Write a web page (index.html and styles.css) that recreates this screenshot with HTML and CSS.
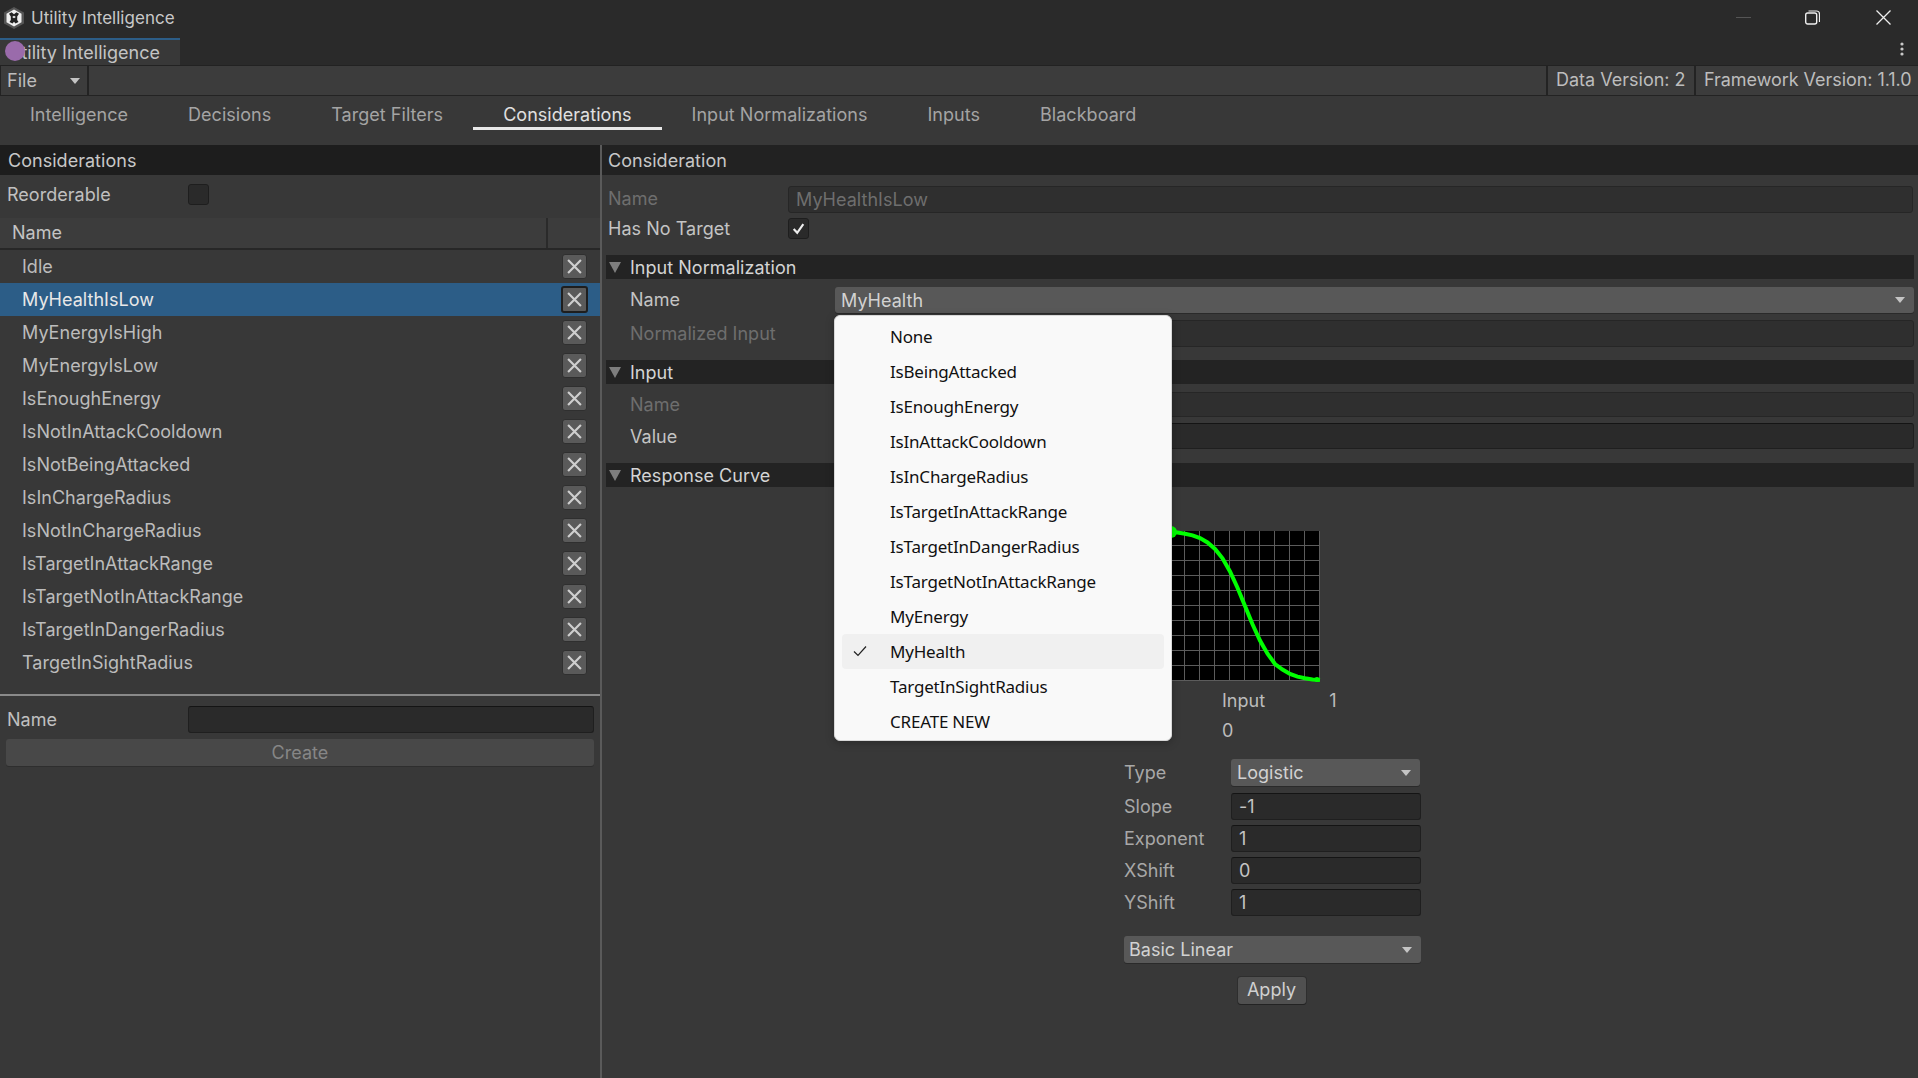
FILE: index.html
```html
<!DOCTYPE html>
<html lang="en">
<head>
<meta charset="utf-8">
<title>Utility Intelligence</title>
<link rel="stylesheet" href="styles.css">
</head>
<body>
<div class="app">
  <header class="titlebar">
    <svg class="logo" viewBox="0 0 20 22" aria-hidden="true">
      <path d="M10 0 20 5.500v11L10 22 0 16.500v-11z" fill="#555"/>
      <path d="M10 2.500 17.500 6.800v8.400L10 19.500 2.500 15.200V6.800z" fill="#f0f0f0"/>
      <path d="M10 7.200 7.600 5.200 5 6.700l1.800 2.800v3.400L5.500 15l3 1.500L10 14.800l1.500 1.700 3-1.500-1.300-2.100V9.500L15 6.700l-2.600-1.500z" fill="#222"/>
      <path d="M10 8.800 11.800 10 10 11.200 8.200 10z" fill="#f0f0f0"/>
    </svg>
    <span class="title-text">Utility Intelligence</span>
    <div class="win-controls">
      <svg class="win-min" viewBox="0 0 15 15" aria-hidden="true"><path d="M0 7.500h15" stroke="#555" fill="none"/></svg>
      <svg class="win-restore" viewBox="0 0 15 15" aria-hidden="true"><rect x=".7" y="3" width="11" height="11" rx="2" fill="none" stroke="#eee" stroke-width="1.400"/><path d="M3.500 1h8a3 3 0 0 1 3 3v8" fill="none" stroke="#eee" stroke-width="1.200"/></svg>
      <svg class="win-close" viewBox="0 0 15 15" aria-hidden="true"><path d="M.5.500l14 14M14.500.500l-14 14" stroke="#eee" stroke-width="1.300" fill="none"/></svg>
    </div>
  </header>

  <div class="tabstrip">
    <div class="doc-tab"><span class="doc-tab-text">Utility Intelligence</span><span class="cursor-dot"></span></div>
    <svg class="kebab" viewBox="0 0 4 14" aria-hidden="true"><circle cx="2" cy="2" r="1.600"/><circle cx="2" cy="7" r="1.600"/><circle cx="2" cy="12" r="1.600"/></svg>
  </div>

  <div class="menubar">
    <div class="menu-cell file-cell"><span>File</span><span class="arrow arrow-sm"></span></div>
    <div class="menu-cell menu-fill"></div>
    <div class="menu-cell data-cell">Data Version: 2</div>
    <div class="menu-cell fw-cell">Framework Version: 1.1.0</div>
  </div>

  <nav class="tabs">
    <span class="tab">Intelligence</span>
    <span class="tab">Decisions</span>
    <span class="tab">Target Filters</span>
    <span class="tab tab-active">Considerations</span>
    <span class="tab">Input Normalizations</span>
    <span class="tab">Inputs</span>
    <span class="tab">Blackboard</span>
  </nav>

  <main class="panes">
    <section class="left">
      <div class="head head-left">Considerations</div>
      <div class="reorder-row">
        <span class="field-label">Reorderable</span>
        <span class="check"></span>
      </div>
      <div class="table-head"><span class="col-name">Name</span><span class="col-action"></span></div>
      <ul class="rows">
        <li class="row"><span>Idle</span><button class="x-btn"><svg viewBox="0 0 14 14"><path d="M1 1l12 12M13 1 1 13"/></svg></button></li>
        <li class="row row-sel"><span>MyHealthIsLow</span><button class="x-btn"><svg viewBox="0 0 14 14"><path d="M1 1l12 12M13 1 1 13"/></svg></button></li>
        <li class="row"><span>MyEnergyIsHigh</span><button class="x-btn"><svg viewBox="0 0 14 14"><path d="M1 1l12 12M13 1 1 13"/></svg></button></li>
        <li class="row"><span>MyEnergyIsLow</span><button class="x-btn"><svg viewBox="0 0 14 14"><path d="M1 1l12 12M13 1 1 13"/></svg></button></li>
        <li class="row"><span>IsEnoughEnergy</span><button class="x-btn"><svg viewBox="0 0 14 14"><path d="M1 1l12 12M13 1 1 13"/></svg></button></li>
        <li class="row"><span>IsNotInAttackCooldown</span><button class="x-btn"><svg viewBox="0 0 14 14"><path d="M1 1l12 12M13 1 1 13"/></svg></button></li>
        <li class="row"><span>IsNotBeingAttacked</span><button class="x-btn"><svg viewBox="0 0 14 14"><path d="M1 1l12 12M13 1 1 13"/></svg></button></li>
        <li class="row"><span>IsInChargeRadius</span><button class="x-btn"><svg viewBox="0 0 14 14"><path d="M1 1l12 12M13 1 1 13"/></svg></button></li>
        <li class="row"><span>IsNotInChargeRadius</span><button class="x-btn"><svg viewBox="0 0 14 14"><path d="M1 1l12 12M13 1 1 13"/></svg></button></li>
        <li class="row"><span>IsTargetInAttackRange</span><button class="x-btn"><svg viewBox="0 0 14 14"><path d="M1 1l12 12M13 1 1 13"/></svg></button></li>
        <li class="row"><span>IsTargetNotInAttackRange</span><button class="x-btn"><svg viewBox="0 0 14 14"><path d="M1 1l12 12M13 1 1 13"/></svg></button></li>
        <li class="row"><span>IsTargetInDangerRadius</span><button class="x-btn"><svg viewBox="0 0 14 14"><path d="M1 1l12 12M13 1 1 13"/></svg></button></li>
        <li class="row"><span>TargetInSightRadius</span><button class="x-btn"><svg viewBox="0 0 14 14"><path d="M1 1l12 12M13 1 1 13"/></svg></button></li>
      </ul>
      <div class="create-box">
        <div class="create-row"><span class="field-label">Name</span><div class="input create-input"></div></div>
        <div class="create-btn">Create</div>
      </div>
    </section>

    <section class="right">
      <div class="head head-right">Consideration</div>
      <div class="top-fields">
        <div class="f-row f-name"><span class="lab dim">Name</span><div class="input input-dim">MyHealthIsLow</div></div>
        <div class="f-row f-target"><span class="lab">Has No Target</span><span class="check"><svg viewBox="0 0 14 14"><path d="M2.500 7.500 5.800 11 11.500 3"/></svg></span></div>
      </div>

      <div class="fold"><span class="tri"></span>Input Normalization</div>
      <div class="group">
        <div class="g-row g-first"><span class="lab2 lab-up">Name</span><div class="dropdown dd-full"><span>MyHealth</span><span class="arrow"></span></div></div>
        <div class="g-row g-norm"><span class="lab2 dim">Normalized Input</span><div class="input input-dim"></div></div>
      </div>

      <div class="fold fold-input"><span class="tri"></span>Input</div>
      <div class="group">
        <div class="g-row g-inname"><span class="lab2 dim">Name</span><div class="input input-dim"></div></div>
        <div class="g-row g-value"><span class="lab2">Value</span><div class="input"></div></div>
      </div>

      <div class="fold fold-curve"><span class="tri"></span>Response Curve</div>

      <div class="curve">
        <div class="graph-block">
          <svg class="graph" viewBox="0 0 150 150" aria-hidden="true">
            <defs>
              <pattern id="grid" width="15" height="15" patternUnits="userSpaceOnUse"><path d="M15 0V15M0 15H15" stroke="#5c5c5c" stroke-width="2" fill="none"/></pattern>
            </defs>
            <rect width="150" height="150" fill="#000"/>
            <rect width="150" height="150" fill="url(#grid)"/>
            <polyline class="curve-line" points="0,1 7.500,1.600 15,2.700 22.500,4.400 30,7 37.500,11.400 45,17.900 52.500,27.300 60,40.400 67.500,56.700 75,75 82.500,93.300 90,109.600 97.500,122.700 105,133 112.500,138.600 120,143 127.500,145.600 135,147.300 142.500,148.400 150,149"/>
            <circle cx="1" cy="1" r="6" fill="#0f0"/>
            <circle cx="147" cy="148.500" r="2.500" fill="#0f0"/>
          </svg>
          <div class="axis-row"><span class="axis-input">Input</span><span class="axis-one">1</span></div>
          <div class="axis-zero">0</div>
        </div>

        <div class="params">
          <div class="p-row p-type"><span class="p-lab">Type</span><div class="dropdown dd-type"><span>Logistic</span><span class="arrow"></span></div></div>
          <div class="p-row"><span class="p-lab">Slope</span><div class="input">-1</div></div>
          <div class="p-row"><span class="p-lab">Exponent</span><div class="input">1</div></div>
          <div class="p-row"><span class="p-lab">XShift</span><div class="input">0</div></div>
          <div class="p-row"><span class="p-lab">YShift</span><div class="input">1</div></div>
          <div class="dropdown dd-preset"><span>Basic Linear</span><span class="arrow"></span></div>
          <div class="apply-wrap"><div class="apply">Apply</div></div>
        </div>
      </div>
    </section>
  </main>

  <div class="popup">
    <div class="pop-item">None</div>
    <div class="pop-item">IsBeingAttacked</div>
    <div class="pop-item">IsEnoughEnergy</div>
    <div class="pop-item">IsInAttackCooldown</div>
    <div class="pop-item">IsInChargeRadius</div>
    <div class="pop-item">IsTargetInAttackRange</div>
    <div class="pop-item">IsTargetInDangerRadius</div>
    <div class="pop-item">IsTargetNotInAttackRange</div>
    <div class="pop-item">MyEnergy</div>
    <div class="pop-item pop-sel"><svg class="pop-check" viewBox="0 0 14 12" aria-hidden="true"><path d="M1 6.500 5 10.500 13 1.500"/></svg>MyHealth</div>
    <div class="pop-item">TargetInSightRadius</div>
    <div class="pop-item">CREATE NEW</div>
  </div>
</div>
</body>
</html>
```
FILE: styles.css
```css
* { box-sizing: border-box; }
html, body { margin: 0; padding: 0; height: 100%; }
body { background: #383838; font-family: Inter, "Liberation Sans", sans-serif; font-size: 18px; letter-spacing: .03px; color: #c4c4c4; overflow: hidden; }
ul { list-style: none; margin: 0; padding: 0; }
button { padding: 0; font: inherit; }

.app { position: relative; width: 1918px; height: 1078px; display: flex; flex-direction: column; }

.titlebar { height: 38px; background: #2a2a2a; display: flex; align-items: center; padding-left: 4px; }
.logo { width: 20px; height: 22px; margin-right: 7px; margin-top: -3px; }
.title-text { font-size: 17px; color: #c8c8c8; margin-top: -2px; }
.win-controls { margin-left: auto; display: flex; align-items: center; padding-right: 27px; margin-top: -4px; }
.win-controls svg { width: 15px; height: 15px; display: block; }
.win-min { margin-right: 54px; }
.win-restore { margin-right: 56px; }

.tabstrip { height: 28px; background: #2a2a2a; position: relative; border-bottom: 1px solid #222; }
.doc-tab { position: absolute; left: 0; top: 0; width: 180px; height: 27px; background: #383838; border-top: 2px solid #2c5d87; color: #c4c4c4; font-size: 18px; line-height: 25px; padding-left: 8px; overflow: hidden; }
.cursor-dot { position: absolute; left: 5px; top: 1px; width: 20px; height: 20px; border-radius: 50%; background: #9a6bab; }
.kebab { position: absolute; right: 14px; top: 4px; width: 4px; height: 14px; fill: #c8c8c8; }

.menubar { height: 30px; display: flex; background: #232323; gap: 2px; padding: 0 0 1px 1px; }
.menu-cell { background: #3c3c3c; display: flex; align-items: center; color: #bdbdbd; font-size: 18px; white-space: nowrap; }
.file-cell { width: 86px; padding-left: 6px; justify-content: space-between; padding-right: 7px; }
.menu-fill { flex: 1; }
.data-cell { width: 146px; padding: 0 0 2px 8px; letter-spacing: 0; }
.fw-cell { width: 222px; padding: 0 0 2px 8px; letter-spacing: -.05px; }

.arrow { width: 0; height: 0; border-left: 5.500px solid transparent; border-right: 5.500px solid transparent; border-top: 6px solid #c4c4c4; flex: none; }

.tabs { height: 49px; display: flex; align-items: flex-start; padding-top: 6px; }
.tab { padding: 0 30px; height: 28px; line-height: 26px; color: #a4a4a4; border-bottom: 3px solid transparent; white-space: nowrap; font-size: 18px; letter-spacing: .03px; }
.tab-active { color: #e0e0e0; border-bottom-color: #e8e8e8; }

.panes { flex: 1; display: flex; min-height: 0; }
.left { width: 600px; flex: none; }
.right { flex: 1; border-left: 2px solid #5a5a5a; padding-right: 2px; min-width: 0; }

.head { height: 30px; display: flex; align-items: center; color: #c8c8c8; font-size: 18px; }
.head-left { background: #1d1d1d; padding-left: 8px; }
.head-right { background: #222; padding-left: 6px; margin-right: -2px; }

.field-label { color: #c0c0c0; }
.reorder-row { height: 43px; padding: 0 0 4px 7px; display: flex; align-items: center; }
.reorder-row .check { margin-left: auto; margin-right: 391px; }

.check { width: 21px; height: 21px; border-radius: 3px; background: #2a2a2a; border: 1px solid #1e1e1e; display: flex; align-items: center; justify-content: center; }
.check svg { width: 15px; height: 15px; fill: none; stroke: #eee; stroke-width: 2; }

.table-head { height: 32px; background: #3c3c3c; border-bottom: 2px solid #272727; display: flex; }
.col-name { flex: 1; padding-left: 12px; line-height: 30px; border-right: 2px solid #2a2a2a; color: #c4c4c4; }
.col-action { width: 52px; }

.row { height: 33px; display: flex; align-items: center; justify-content: space-between; padding: 0 13px 0 22px; color: #bcbcbc; }
.row-sel { background: #2c5d87; color: #e8e8e8; }
.x-btn { width: 25px; height: 25px; background: #5a5a5a; border: 1px solid #2f2f2f; border-radius: 3px; display: flex; align-items: center; justify-content: center; }
.row-sel .x-btn { border: 2px solid #1e1e1e; width: 27px; height: 27px; margin-right: -1px; }
.x-btn svg { width: 15px; height: 15px; fill: none; stroke: #cfcfcf; stroke-width: 2; }

.create-box { margin-top: 15px; border-top: 2px solid #8a8a8a; padding: 9px 6px 0 7px; }
.create-row { display: flex; align-items: center; justify-content: space-between; height: 28px; }
.create-input { width: 406px; }
.create-btn { margin: 6px 0 0 -1px; height: 27px; background: #484848; border-radius: 3px; color: #868686; text-align: center; line-height: 27px; box-shadow: 0 1px 0 #2e2e2e; }

.input { height: 27px; background: #2a2a2a; border: 1px solid #1f1f1f; border-top-color: #141414; border-radius: 3px; color: #c4c4c4; padding-left: 7px; line-height: 26px; font-size: 18px; }
.input-dim { background: #2f2f2f; border-color: #262626; color: #6e6e6e; }

.top-fields { padding-left: 6px; }
.lab { width: 180px; flex: none; color: #c4c4c4; }
.lab2 { width: 205px; flex: none; color: #c4c4c4; }
.lab-up { margin-top: -2px; }
.dim { color: #6e6e6e; }
.f-row { display: flex; align-items: center; }
.f-row .input { flex: 1; margin-right: 3px; }
.f-name { margin-top: 11px; height: 27px; }
.f-name .lab { margin-top: -2px; }
.f-target { margin-top: 5px; height: 21px; }

.fold { background: #232323; height: 24px; margin: 16px 2px 0 4px; display: flex; align-items: center; color: #d4d4d4; padding-left: 3px; }
.tri { width: 0; height: 0; border-left: 6.500px solid transparent; border-right: 6.500px solid transparent; border-top: 11px solid #7e7e7e; margin-right: 9px; }
.fold-input { margin-top: 13px; }
.fold-curve { margin-top: 14px; }

.group { padding-left: 28px; }
.g-row { display: flex; align-items: center; }
.g-row .input, .g-row .dropdown { flex: 1; margin-right: 2px; }
.g-first { margin-top: 8px; height: 26px; }
.g-norm { margin-top: 7px; height: 27px; }
.g-inname { margin-top: 8px; height: 25px; }
.g-inname .input { height: 25px; }
.g-value { margin-top: 6px; height: 26px; }
.g-value .input { height: 26px; }

.dropdown { height: 26px; background: #585858; border-radius: 3px; display: flex; align-items: center; justify-content: space-between; padding: 0 9px 0 6px; color: #d2d2d2; box-shadow: 0 1px 0 #2a2a2a; }

.curve { margin-left: 522px; width: 297px; padding-top: 44px; }
.graph-block { margin-left: 46px; }
.graph { width: 150px; height: 150px; display: block; overflow: visible; }
.curve-line { fill: none; stroke: #0f0; stroke-width: 4; }
.axis-row { height: 36px; padding: 7px 0 0 52px; color: #bcbcbc; line-height: 26px; display: flex; }
.axis-one { margin-left: 64px; }
.axis-zero { padding-left: 52px; color: #bcbcbc; line-height: 26px; height: 26px; padding-top: 1px; }

.params { margin-top: 16px; }
.p-row { display: flex; align-items: center; height: 27px; margin-bottom: 5px; }
.p-type { margin-bottom: 7px; }
.p-lab { width: 107px; flex: none; color: #a8a8a8; }
.p-row .input, .p-row .dropdown { flex: 1; }
.p-row .dropdown { margin: 0 1px 0 0; height: 27px; }
.dd-preset { margin-top: 20px; height: 27px; padding-left: 5px; }
.apply-wrap { display: flex; justify-content: center; margin-top: 14px; margin-left: -2px; }
.apply { width: 68px; height: 27px; background: #505050; border-radius: 3px; color: #d0d0d0; text-align: center; line-height: 26px; box-shadow: 0 1px 0 #232323, 0 0 0 1px #2e2e2e; }

.popup { position: absolute; left: 834px; top: 315px; width: 338px; height: 426px; background: #f9f9f9; border: 1px solid #d8d8d8; border-radius: 6px; padding: 3px 7px; font-family: "Noto Sans", "Open Sans", sans-serif; font-size: 17px; color: #111; box-shadow: 0 2px 8px rgba(0,0,0,.25); }
.pop-item { position: relative; height: 35px; line-height: 35px; padding-left: 48px; letter-spacing: -.2px; white-space: nowrap; }
.pop-sel { background: #f0f0f0; border-radius: 4px; }
.pop-check { position: absolute; left: 11px; top: 11px; width: 14px; height: 12px; fill: none; stroke: #222; stroke-width: 1.200; }
```
